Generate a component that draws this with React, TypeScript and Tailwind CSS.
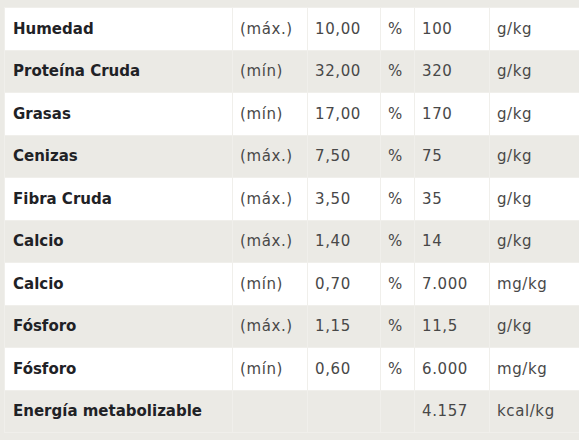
const rows: [string, string, string, string, string, string][] = [
  ['Humedad', '(máx.)', '10,00', '%', '100', 'g/kg'],
  ['Proteína Cruda', '(mín)', '32,00', '%', '320', 'g/kg'],
  ['Grasas', '(mín)', '17,00', '%', '170', 'g/kg'],
  ['Cenizas', '(máx.)', '7,50', '%', '75', 'g/kg'],
  ['Fibra Cruda', '(máx.)', '3,50', '%', '35', 'g/kg'],
  ['Calcio', '(máx.)', '1,40', '%', '14', 'g/kg'],
  ['Calcio', '(mín)', '0,70', '%', '7.000', 'mg/kg'],
  ['Fósforo', '(máx.)', '1,15', '%', '11,5', 'g/kg'],
  ['Fósforo', '(mín)', '0,60', '%', '6.000', 'mg/kg'],
  ['Energía metabolizable', '', '', '', '4.157', 'kcal/kg'],
];

export default function App() {
  return (
    <div className="w-[579px] h-[440px] overflow-hidden bg-[#ebeae5] pl-[4px] pt-[7px]">
      <table className="border-collapse w-[640px] table-fixed">
        <colgroup>
          <col className="w-[228px]" />
          <col className="w-[75px]" />
          <col className="w-[73px]" />
          <col className="w-[34px]" />
          <col className="w-[75px]" />
          <col />
        </colgroup>
        <tbody>
          {rows.map((r, i) => (
            <tr key={i} className={`h-[42.5px] ${i % 2 === 0 ? 'bg-white' : 'bg-[#ebeae5]'}`}>
              <td className="border border-[#f0efeb] pl-[8px] font-['DejaVu_Sans',sans-serif] font-bold text-[15px] text-[#1f2226]">
                {r[0]}
              </td>
              {r.slice(1).map((c, j) => (
                <td
                  key={j}
                  className="border border-[#f0efeb] pl-[7px] font-['DejaVu_Sans',sans-serif] text-[15px] font-normal tracking-[0.6px] text-[#484848]"
                >
                  {c}
                </td>
              ))}
            </tr>
          ))}
        </tbody>
      </table>
    </div>
  );
}
